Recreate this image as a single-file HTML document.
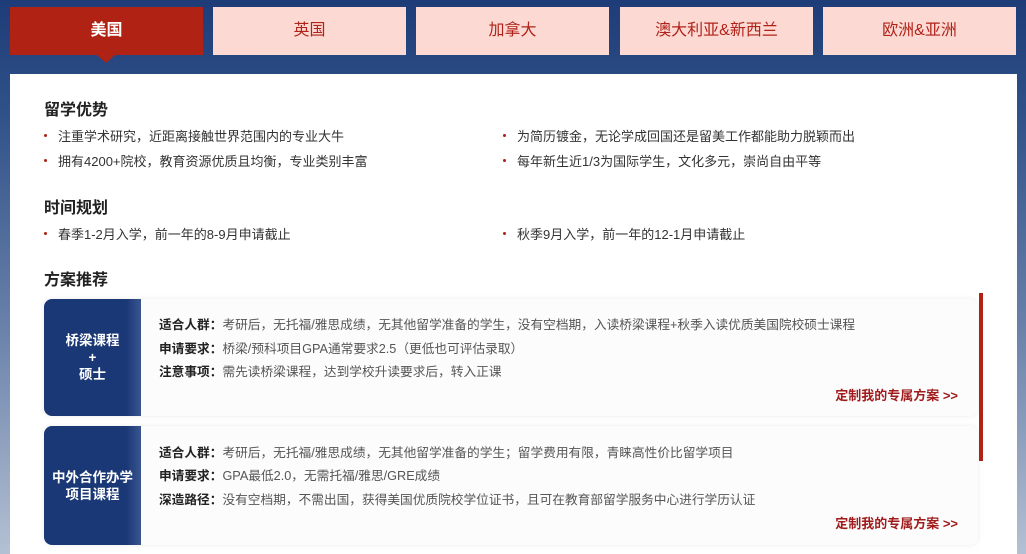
<!DOCTYPE html>
<html style="width:1026px;height:550px;background:#b3bfd2"><head><meta charset="utf-8"><style>
*{margin:0;padding:0;box-sizing:border-box}
body{width:1026px;height:550px;overflow:hidden;font-family:"Liberation Sans","Noto Sans CJK SC",sans-serif;background:linear-gradient(#1e3c78 0%,#2f5088 20%,#6a82aa 60%,#b3bfd2 100%);position:relative}
.tab{position:absolute;top:7px;height:48px;background:#fcd9d2;color:#b0231a;font-size:16px;line-height:48px;text-align:center}
.tab.a{background:#b02214;color:#fff;font-weight:bold}
.arr{position:absolute;left:97px;top:55px;width:0;height:0;border-left:9px solid transparent;border-right:9px solid transparent;border-top:8px solid #b02214}
.panel{position:absolute;left:10px;top:74px;width:1007px;height:480px;background:#fff}
.h{position:absolute;left:44px;font-size:16px;font-weight:bold;color:#222}
.li{position:absolute;font-size:13px;color:#333;padding-left:14px;white-space:nowrap}
.li:before{content:"";position:absolute;left:0;top:8px;width:3px;height:3px;background:#b02214;border-radius:50%}
.card{position:absolute;left:44px;width:934px;background:#fcfcfc;border-radius:8px;box-shadow:0 0 6px rgba(0,0,0,.08)}
.lb{position:absolute;left:0;top:0;bottom:0;width:97px;background:linear-gradient(90deg,#1b3876 85%,#3a5690);border-radius:8px 0 0 8px;color:#fff;font-weight:bold;font-size:13.5px;text-align:center;display:flex;align-items:center;justify-content:center;line-height:17px}
.row{position:absolute;left:115px;font-size:12.7px;color:#555;white-space:nowrap}
.row b{color:#222}
.lk{position:absolute;right:20px;font-size:13px;font-weight:bold;color:#a01c1c}
</style></head><body>
<div class="tab a" style="left:10px;width:193px">美国</div>
<div class="arr"></div>
<div class="tab" style="left:213px;width:193px">英国</div>
<div class="tab" style="left:416px;width:193px">加拿大</div>
<div class="tab" style="left:620px;width:193px">澳大利亚&amp;新西兰</div>
<div class="tab" style="left:823px;width:193px">欧洲&amp;亚洲</div>
<div class="panel"></div>
<div class="h" style="top:96px">留学优势</div>
<div class="li" style="left:44px;top:126px">注重学术研究，近距离接触世界范围内的专业大牛</div>
<div class="li" style="left:503px;top:126px">为简历镀金，无论学成回国还是留美工作都能助力脱颖而出</div>
<div class="li" style="left:44px;top:151px">拥有4200+院校，教育资源优质且均衡，专业类别丰富</div>
<div class="li" style="left:503px;top:151px">每年新生近1/3为国际学生，文化多元，崇尚自由平等</div>
<div class="h" style="top:194px">时间规划</div>
<div class="li" style="left:44px;top:224px">春季1-2月入学，前一年的8-9月申请截止</div>
<div class="li" style="left:503px;top:224px">秋季9月入学，前一年的12-1月申请截止</div>
<div class="h" style="top:266px">方案推荐</div>
<div class="card" style="top:299px;height:117px">
<div class="lb">桥梁课程<br>+<br>硕士</div>
<div class="row" style="top:15px"><b>适合人群：</b>考研后，无托福/雅思成绩，无其他留学准备的学生，没有空档期，入读桥梁课程+秋季入读优质美国院校硕士课程</div>
<div class="row" style="top:39px"><b>申请要求：</b>桥梁/预科项目GPA通常要求2.5（更低也可评估录取）</div>
<div class="row" style="top:62px"><b>注意事项：</b>需先读桥梁课程，达到学校升读要求后，转入正课</div>
<div class="lk" style="top:86px">定制我的专属方案 &gt;&gt;</div>
</div>
<div class="card" style="top:426px;height:119px">
<div class="lb">中外合作办学<br>项目课程</div>
<div class="row" style="top:16px"><b>适合人群：</b>考研后，无托福/雅思成绩，无其他留学准备的学生；留学费用有限，青睐高性价比留学项目</div>
<div class="row" style="top:39px"><b>申请要求：</b>GPA最低2.0，无需托福/雅思/GRE成绩</div>
<div class="row" style="top:63px"><b>深造路径：</b>没有空档期，不需出国，获得美国优质院校学位证书，且可在教育部留学服务中心进行学历认证</div>
<div class="lk" style="top:87px">定制我的专属方案 &gt;&gt;</div>
</div>
<div style="position:absolute;left:979px;top:293px;width:4px;height:168px;background:#b02214"></div>
</body></html>
